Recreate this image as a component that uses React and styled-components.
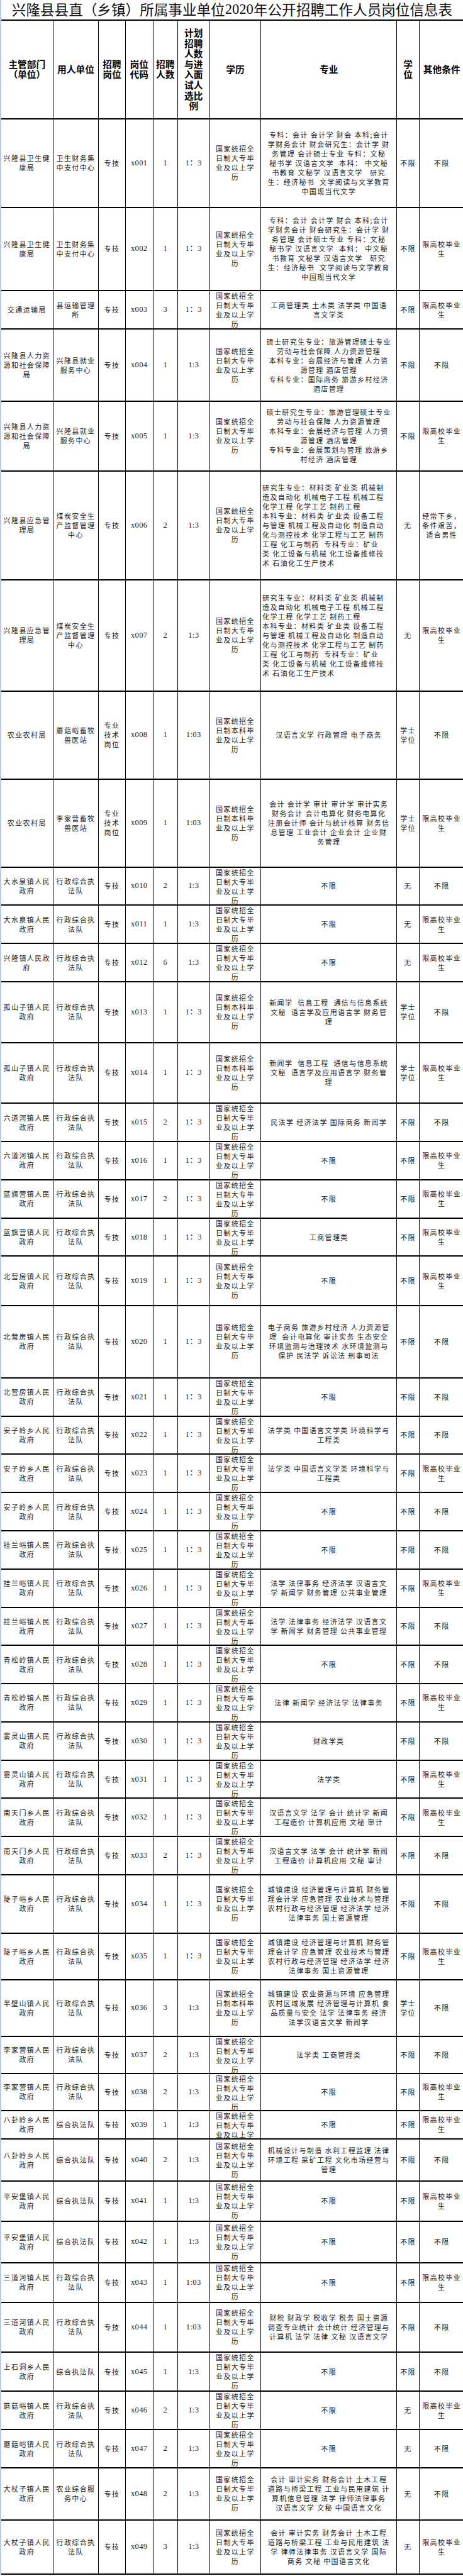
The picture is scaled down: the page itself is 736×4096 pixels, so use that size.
import React from 'react';
import styled, { createGlobalStyle } from 'styled-components';

const S = 0.921;
const COLS = [89.7, 79, 45.9, 47.9, 42.3, 55.5, 88.2, 235, 38.2, 77.3];
const GRID = COLS.map((w) => `${(w * S).toFixed(2)}px`).join(' ');

const GlobalStyle = createGlobalStyle`
  html, body {
    margin: 0;
    padding: 0;
    background: #ffffff;
  }
  body {
    font-family: "Noto Sans CJK SC", "Noto Sans", sans-serif;
    color: #111;
  }
`;

const Page = styled.div`
  width: 736px;
  box-sizing: border-box;
  border-left: 2px solid #b9c9e2;
`;

const Title = styled.h1`
  margin: 0;
  height: ${36 * S}px;
  box-sizing: border-box;
  border-bottom: 2px solid #000;
  display: flex;
  align-items: center;
  justify-content: center;
  font-size: 22.6px;
  font-weight: 400;
  line-height: 1;
  color: #111;
  white-space: nowrap;
`;

const Digits = styled.span`
  font-family: "Liberation Serif", serif;
`;

const Row = styled.div`
  display: grid;
  grid-template-columns: ${GRID};
  height: ${({ $h }) => ($h * S).toFixed(2)}px;
  box-sizing: border-box;
  border-bottom: 2px solid #000;
`;

const Cell = styled.div`
  display: flex;
  flex-direction: column;
  align-items: stretch;
  justify-content: safe center;
  box-sizing: border-box;
  overflow: hidden;
  border-right: ${({ $last }) => ($last ? 'none' : '1px solid #000')};
  padding: 0 2px;
  text-align: ${({ $left }) => ($left ? 'left' : 'center')};
  font-family: ${({ $serif }) =>
    $serif ? '"Liberation Serif", "Noto Sans CJK SC", serif' : '"Noto Sans CJK SC", sans-serif'};
  font-size: ${({ $serif }) => ($serif ? '12.5px' : '11px')};
  letter-spacing: ${({ $serif }) => ($serif ? '0.4px' : '1.4px')};
  line-height: 15px;
  color: #1a1a1a;
`;

const HeadCell = styled(Cell)`
  font-family: "Noto Sans CJK SC", sans-serif;
  font-size: 14.7px;
  font-weight: 700;
  letter-spacing: 0;
  line-height: 16.6px;
  color: #000;
`;

const Line = styled.span`
  display: block;
  white-space: pre;
`;

const Lines = ({ lines }) =>
  (Array.isArray(lines) ? lines : [lines]).map((l, i) => <Line key={i}>{l}</Line>);

const EDU_DZ = ['国家统招全', '日制大专毕', '业及以上学', '历'];
const EDU_BK = ['国家统招全', '日制本科毕', '业及以上学', '历'];
const LIMIT = ['限高校毕业', '生'];
const NONE = '不限';
const ZF = '行政综合执法队';
const UNIT = ['行政综合执', '法队'];

const M_FIN = [
  '专科：会计 会计学 财会 本科;会计',
  '学财务会计 财会研究生：会计学 财',
  '务管理 会计硕士专业 专科：文秘',
  '秘书学 汉语言文学  本科： 中文秘',
  '书教育 文秘学 汉语言文学   研究',
  '生：经济秘书  文学阅读与文学教育',
  '中国现当代文学',
];
const M_HR1 = [
  '硕士研究生专业：旅游管理硕士专业',
  '劳动与社会保障 人力资源管理',
  '本科专业：会展经济与管理 人力资',
  '源管理 酒店管理',
  '专科专业：国际商务 旅游乡村经济',
  '酒店管理',
];
const M_HR2 = [
  '硕士研究生专业：旅游管理硕士专业',
  '劳动与社会保障 人力资源管理',
  '本科专业：会展经济与管理 人力资',
  '源管理 酒店管理',
  '专科专业：会展策划与管理 旅游乡',
  '村经济 酒店管理',
];
const M_MINE = [
  '研究生专业：材料类 矿业类 机械制',
  '造及自动化 机械电子工程 机械工程',
  '化学工程 化学工艺 制药工程',
  '本科专业：材料类 矿业类 设备工程',
  '与管理 机械工程及自动化 制造自动',
  '化与测控技术 化学工程与工艺 制药',
  '工程 化工与制药  专科专业：矿业',
  '类 化工设备与机械 化工设备维修技',
  '术 石油化工生产技术',
];
const M_GSZ = ['新闻学  信息工程  通信与信息系统', '文秘  语言学及应用语言学 财务管', '理'];
const M_AZL = ['法学类 中国语言文学类 环境科学与', '工程类'];
const M_GLY = ['法学 法律事务 经济法学 汉语言文', '学 新闻学 财务管理 公共事业管理'];
const M_NTM = ['汉语言文学 法学 会计 统计学 新闻', '工程造价 计算机应用 文秘 审计'];
const M_DZY = [
  '城镇建设 经济管理与计算机 财务管',
  '理会计学 应急管理 农业技术与管理',
  '农村行政与经济管理 经济法学 经济',
  '法律事务 国土资源管理',
];

const ROWS = [
  { h: 153, dept: ['兴隆县卫生健', '康局'], unit: ['卫生财务集', '中支付中心'], num: '1', ratio: '1：3', major: M_FIN, degree: NONE, other: NONE },
  { h: 144, dept: ['兴隆县卫生健', '康局'], unit: ['卫生财务集', '中支付中心'], num: '1', ratio: '1：3', major: M_FIN, degree: NONE, other: LIMIT },
  { h: 66, dept: '交通运输局', unit: ['县运输管理', '所'], num: '3', ratio: '1：3', major: ['工商管理类 土木类 法学类 中国语', '言文学类'], degree: NONE, other: LIMIT },
  { h: 125, dept: ['兴隆县人力资', '源和社会保障', '局'], unit: ['兴隆县就业', '服务中心'], num: '1', ratio: '1:3', major: M_HR1, degree: NONE, other: NONE },
  { h: 120, dept: ['兴隆县人力资', '源和社会保障', '局'], unit: ['兴隆县就业', '服务中心'], num: '1', ratio: '1:3', major: M_HR2, degree: NONE, other: LIMIT },
  { h: 188, dept: ['兴隆县应急管', '理局'], unit: ['煤炭安全生', '产监督管理', '中心'], num: '2', ratio: '1:3', major: M_MINE, left: true, degree: '无', other: ['经常下乡，', '条件艰苦，', '适合男性'] },
  { h: 192, dept: ['兴隆县应急管', '理局'], unit: ['煤炭安全生', '产监督管理', '中心'], num: '2', ratio: '1:3', major: M_MINE, left: true, degree: '无', other: LIMIT },
  { h: 152, dept: '农业农村局', unit: ['蘑菇峪畜牧', '兽医站'], post: ['专业', '技术', '岗位'], num: '1', ratio: '1:03', edu: EDU_BK, major: '汉语言文学 行政管理 电子商务', degree: ['学士', '学位'], other: NONE },
  {
    h: 152, dept: '农业农村局', unit: ['李家营畜牧', '兽医站'], post: ['专业', '技术', '岗位'], num: '1', ratio: '1:03', edu: EDU_BK,
    major: ['会计 会计学 审计 审计学 审计实务', '财务会计 会计电算化 财务电算化', '注册会计师 会计与统计核算 财务信', '息管理 工业会计 企业会计 企业财', '务管理'],
    degree: ['学士', '学位'], other: LIMIT,
  },
  { h: 66, dept: ['大水泉镇人民', '政府'], num: '2', ratio: '1:3', major: NONE, degree: '无', other: NONE },
  { h: 66, dept: ['大水泉镇人民', '政府'], num: '1', ratio: '1:3', major: NONE, degree: '无', other: LIMIT },
  { h: 66, dept: ['兴隆镇人民政', '府'], num: '6', ratio: '1:3', major: NONE, degree: '无', other: LIMIT },
  { h: 105, dept: ['孤山子镇人民', '政府'], num: '1', ratio: '1：3', edu: EDU_BK, major: M_GSZ, degree: ['学士', '学位'], other: NONE },
  { h: 105, dept: ['孤山子镇人民', '政府'], num: '1', ratio: '1：3', edu: EDU_BK, major: M_GSZ, degree: ['学士', '学位'], other: LIMIT },
  { h: 66, dept: ['六道河镇人民', '政府'], num: '2', ratio: '1：3', major: '民法学 经济法学 国际商务 新闻学', degree: NONE, other: NONE },
  { h: 66, dept: ['六道河镇人民', '政府'], num: '1', ratio: '1：3', major: NONE, degree: NONE, other: LIMIT },
  { h: 66, dept: ['蓝旗营镇人民', '政府'], num: '2', ratio: '1：3', major: NONE, degree: NONE, other: LIMIT },
  { h: 66, dept: ['蓝旗营镇人民', '政府'], num: '1', ratio: '1：3', major: '工商管理类', degree: NONE, other: LIMIT },
  { h: 85, dept: ['北营房镇人民', '政府'], num: '1', ratio: '1：3', major: NONE, degree: NONE, other: LIMIT },
  {
    h: 125, dept: ['北营房镇人民', '政府'], num: '1', ratio: '1：3',
    major: ['电子商务 旅游乡村经济 人力资源管', '理  会计电算化 审计实务 生态安全', '环境监测与治理技术 水环境监测与', '保护 民法学 诉讼法 刑事司法'],
    degree: NONE, other: NONE,
  },
  { h: 66, dept: ['北营房镇人民', '政府'], num: '1', ratio: '1：3', major: NONE, degree: NONE, other: NONE },
  { h: 66, dept: ['安子岭乡人民', '政府'], num: '1', ratio: '1：3', major: M_AZL, degree: NONE, other: NONE },
  { h: 66, dept: ['安子岭乡人民', '政府'], num: '1', ratio: '1：3', major: M_AZL, degree: NONE, other: LIMIT },
  { h: 66, dept: ['安子岭乡人民', '政府'], num: '1', ratio: '1：3', major: NONE, degree: NONE, other: NONE },
  { h: 66, dept: ['挂兰峪镇人民', '政府'], num: '1', ratio: '1：3', major: NONE, degree: NONE, other: NONE },
  { h: 66, dept: ['挂兰峪镇人民', '政府'], num: '1', ratio: '1：3', major: M_GLY, degree: NONE, other: LIMIT },
  { h: 66, dept: ['挂兰峪镇人民', '政府'], num: '1', ratio: '1：3', major: M_GLY, degree: NONE, other: NONE },
  { h: 66, dept: ['青松岭镇人民', '政府'], num: '1', ratio: '1：3', major: NONE, degree: NONE, other: NONE },
  { h: 66, dept: ['青松岭镇人民', '政府'], num: '1', ratio: '1：3', major: '法律 新闻学 经济法学 法律事务', degree: NONE, other: LIMIT },
  { h: 66, dept: ['雾灵山镇人民', '政府'], num: '1', ratio: '1：3', major: '财政学类', degree: NONE, other: NONE },
  { h: 66, dept: ['雾灵山镇人民', '政府'], num: '1', ratio: '1：3', major: '法学类', degree: NONE, other: LIMIT },
  { h: 66, dept: ['南天门乡人民', '政府'], num: '1', ratio: '1：3', major: M_NTM, degree: NONE, other: LIMIT },
  { h: 66, dept: ['南天门乡人民', '政府'], num: '2', ratio: '1：3', major: M_NTM, degree: NONE, other: NONE },
  { h: 101, dept: ['陡子峪乡人民', '政府'], num: '1', ratio: '1：3', major: M_DZY, degree: NONE, other: NONE },
  { h: 80, dept: ['陡子峪乡人民', '政府'], num: '1', ratio: '1：3', major: M_DZY, degree: NONE, other: LIMIT },
  {
    h: 98, dept: ['半壁山镇人民', '政府'], num: '3', ratio: '1:3', edu: EDU_BK,
    major: ['城镇建设 农业资源与环境 应急管理', '农村区域发展 经济管理与计算机 食', '品质量与安全 法学 法律事务 经济', '法学汉语言文学 新闻学'],
    degree: ['学士', '学位'], other: NONE,
  },
  { h: 64, dept: ['李家营镇人民', '政府'], num: '2', ratio: '1:3', major: '法学类 工商管理类', degree: NONE, other: NONE },
  { h: 64, dept: ['李家营镇人民', '政府'], num: '2', ratio: '1:3', major: NONE, degree: NONE, other: LIMIT },
  { h: 49, dept: ['八卦岭乡人民', '政府'], unit: '综合执法队', num: '1', ratio: '1:3', major: NONE, degree: NONE, other: LIMIT },
  {
    h: 73, dept: ['八卦岭乡人民', '政府'], unit: '综合执法队', num: '2', ratio: '1:3',
    major: ['机械设计与制造 水利工程监理 法律', '环境工程 采矿工程 文化市场经营与', '管理'], degree: NONE, other: NONE,
  },
  { h: 69, dept: ['平安堡镇人民', '政府'], unit: '综合执法队', num: '1', ratio: '1:3', major: NONE, degree: NONE, other: LIMIT },
  { h: 72, dept: ['平安堡镇人民', '政府'], unit: '综合执法队', num: '1', ratio: '1:3', major: NONE, degree: NONE, other: NONE },
  { h: 68, dept: ['三道河镇人民', '政府'], num: '1', ratio: '1:03', major: NONE, degree: NONE, other: LIMIT },
  {
    h: 86, dept: ['三道河镇人民', '政府'], num: '1', ratio: '1:03',
    major: ['财税 财政学 税收学 税务 国土资源', '调查专业统计 会计统计 经济管理与', '计算机 法学 法律 文秘 汉语言文学'],
    degree: NONE, other: NONE,
  },
  { h: 68, dept: ['上石洞乡人民', '政府'], unit: '综合执法队', num: '1', ratio: '1:3', major: NONE, degree: NONE, other: NONE },
  { h: 66, dept: ['蘑菇峪镇人民', '政府'], num: '2', ratio: '1:3', major: NONE, degree: '无', other: LIMIT },
  { h: 66, dept: ['蘑菇峪镇人民', '政府'], num: '2', ratio: '1:3', major: NONE, degree: '无', other: NONE },
  {
    h: 90, dept: ['大杖子镇人民', '政府'], unit: ['农业综合服', '务中心'], num: '2', ratio: '1:3',
    major: ['会计 审计实务 财务会计 土木工程', '道路与桥梁工程 工业与民用建筑 计', '算机信息管理 法学 律师法律事务', '汉语言文学 文秘 中国语言文化'],
    degree: '无', other: NONE,
  },
  {
    h: 93, dept: ['大杖子镇人民', '政府'], num: '3', ratio: '1:3',
    major: ['会计 审计实务 财务会计 土木工程', '道路与桥梁工程 工业与民用建筑 法', '学 律师法律事务 汉语言文学 国际', '商务 文秘 中国语言文化'],
    degree: '无', other: LIMIT,
  },
];

const HEAD = [
  ['主管部门', '（单位）'],
  '用人单位',
  ['招聘', '岗位'],
  ['岗位', '代码'],
  ['招聘', '人数'],
  ['计划', '招聘', '人数', '与进', '入面', '试人', '选比', '例'],
  '学历',
  '专业',
  ['学', '位'],
  '其他条件',
];

const DataRow = ({ row, index }) => {
  const code = `x${String(index + 1).padStart(3, '0')}`;
  return (
    <Row $h={row.h}>
      <Cell><Lines lines={row.dept} /></Cell>
      <Cell><Lines lines={row.unit || UNIT} /></Cell>
      <Cell><Lines lines={row.post || '专技'} /></Cell>
      <Cell $serif><Lines lines={code} /></Cell>
      <Cell $serif><Lines lines={row.num} /></Cell>
      <Cell $serif><Lines lines={row.ratio} /></Cell>
      <Cell><Lines lines={row.edu || EDU_DZ} /></Cell>
      <Cell $left={row.left}><Lines lines={row.major} /></Cell>
      <Cell><Lines lines={row.degree} /></Cell>
      <Cell $last><Lines lines={row.other} /></Cell>
    </Row>
  );
};

export default function App() {
  return (
    <Page>
      <GlobalStyle />
      <Title>
        兴隆县县直（乡镇）所属事业单位<Digits>2020</Digits>年公开招聘工作人员岗位信息表
      </Title>
      <Row $h={170}>
        {HEAD.map((h, i) => (
          <HeadCell key={i} $last={i === HEAD.length - 1}>
            <Lines lines={h} />
          </HeadCell>
        ))}
      </Row>
      {ROWS.map((row, i) => (
        <DataRow key={i} row={row} index={i} />
      ))}
    </Page>
  );
}
